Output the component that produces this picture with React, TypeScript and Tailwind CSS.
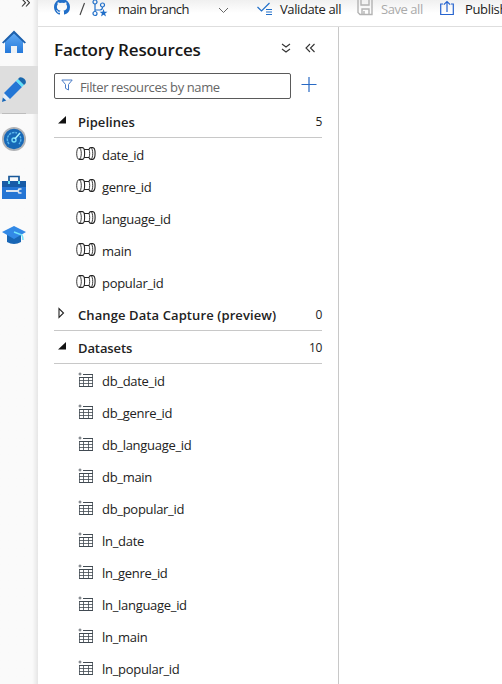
import React from "react";

const pipelines = ["date_id", "genre_id", "language_id", "main", "popular_id"];
const datasets = [
  "db_date_id", "db_genre_id", "db_language_id", "db_main", "db_popular_id",
  "ln_date", "ln_genre_id", "ln_language_id", "ln_main", "ln_popular_id",
];

function PipelineIcon() {
  return (
    <svg className="mt-[9px] h-[13px] w-5 shrink-0 self-start" viewBox="0 0 20 13" fill="none" stroke="#252525" strokeWidth="1.1">
      <ellipse cx="3" cy="6.500" rx="2.300" ry="5.900" strokeWidth=".9" />
      <path d="M3 .6h3.500C9.300.6 9.300 12.400 6.500 12.400H3" />
      <path d="M8 2.500h5M8 10.500h5" />
      <path d="M13 2.500q.5-1.900 2-1.900h1.700c3.200 0 3.200 11.800 0 11.800H15q-1.500 0-2-1.900" />
      <path d="M13 2.500c.9 2 .9 6 0 8M15 .6c2.300 1.500 2.300 10.300 0 11.800" strokeWidth=".9" />
    </svg>
  );
}

function DatasetIcon() {
  return (
    <svg className="ml-[2px] mr-[2px] mt-[8px] h-4 w-4 shrink-0 self-start" viewBox="0 0 16 16" fill="none" stroke="#414a52">
      <path d="M5 2.500h10M1 5.500h14M1 14.500h14" strokeWidth="1.100" />
      <path d="M1.500 5v9M5.500 5v9M10.500 5v9M14.500 2v12M1 8.500h14M1 11.500h14" strokeWidth=".8" />
      <path d="M.5 2h3M2 .5v3" strokeWidth=".8" />
    </svg>
  );
}

function Section({ title, count, open, titleClass }: { title: string; count: number; open: boolean; titleClass: string }) {
  return (
    <div className="flex h-[33px] items-center border-b border-[#c8c8c8] pt-px text-[#222]">
      <svg className="mb-[3px] ml-[3px] mr-[9px] h-3 w-3" viewBox="0 0 12 12">
        {open ? <path d="M1 9.500 9 2v7.500z" fill="#111" /> : <path d="M2 1.500v9L6.500 6z" fill="none" stroke="#222" strokeWidth="1.100" />}
      </svg>
      <span className={`flex-1 whitespace-nowrap pt-[2px] text-[13px] font-semibold ${titleClass}`}>{title}</span>
      <span className="pt-px text-[12px] font-medium tracking-[-0.4px]">{count}</span>
    </div>
  );
}

function Rows({ names, kind }: { names: string[]; kind: "pipeline" | "dataset" }) {
  return (
    <ul>
      {names.map((n) => (
        <li key={n} className="flex h-8 items-center pl-[22px]">
          {kind === "pipeline" ? <PipelineIcon /> : <DatasetIcon />}
          <span className="ml-[6px] pt-[3px] text-[13px] tracking-[-0.3px] text-[#222]">{n}</span>
        </li>
      ))}
    </ul>
  );
}

function Sidebar() {
  return (
    <nav className="flex w-[38px] shrink-0 flex-col bg-gradient-to-r from-[#fafafa] from-85% to-[#e6e6e6]">
      <div className="flex h-[66px] flex-col">
        <svg className="ml-[21px] h-[8px] w-[9px]" viewBox="0 0 9 8" fill="none" stroke="#333" strokeWidth="1.100"><path d="m1-1 3.500 3.700L1 6.500M5-1l3.500 3.700L5 6.500" /></svg>
        <svg className="ml-[2px] mt-[22px] h-6 w-6" viewBox="0 0 24 24">
          <defs><linearGradient id="home" x2="0" y2="1"><stop stopColor="#64adf5" /><stop offset="1" stopColor="#2478da" /></linearGradient></defs>
          <path d="M3 10 12 2l9 8v13H3z" fill="url(#home)" />
          <path d="M9 16h6v7H9z" fill="#edf1f5" />
          <path d="m0 12.500 12-12 12 12-1.500 1L12 3.500l-10.500 10z" fill="#1d60ac" />
        </svg>
      </div>
      <div className="flex h-12 flex-col bg-[#dedede]">
        <svg className="ml-[2px] mt-[11px] h-[26px] w-6" viewBox="0 0 24 26">
          <path d="m2 16 6 6-8 3z" fill="#e4edf6" /><path d="m.8 20.500 3.500 3L0 25z" fill="#1966b5" />
          <path d="M2 16 14 4l6 6L8 22z" fill="#2376d5" /><path d="m14 4 2-2 6 6-2 2z" fill="#5de1fa" />
          <path d="m16 2 1.500-1.500q2.500-.8 5 1.500 2.300 2.500.8 4.700L22 8z" fill="#1867ad" />
        </svg>
        <div className="ml-[2px] mt-[10px] h-px w-6 bg-[#bdbdbd]" />
      </div>
      <svg className="ml-[2px] mt-[13px] h-6 w-6" viewBox="0 0 24 24">
        <circle cx="12" cy="12" r="12" fill="#b1b3b6" /><circle cx="12" cy="12" r="10.200" fill="#1768b7" />
        <path d="M7 17a7 7 0 0 1 8-11M18 9a7 7 0 0 1-1 8" fill="none" stroke="#58b5eb" strokeWidth="1.500" strokeDasharray="2.500 .8" />
        <circle cx="12" cy="13" r="2.700" fill="#76dcfa" /><path d="m12 13 6-7" stroke="#a8f3ff" strokeWidth="1.500" /><circle cx="12" cy="13" r="1.300" fill="#1768b7" />
      </svg>
      <svg className="ml-[2px] mt-[24px] h-[25px] w-6" viewBox="0 0 24 25">
        <path d="M7 6V1.500h10V6" fill="none" stroke="#185899" strokeWidth="1.700" />
        <path d="M0 6h24v18H0z" fill="#2475d4" /><path d="M0 6h24v6H0z" fill="#175ba7" />
        <path d="M6 6h2v3H6zm10 0h2v3h-2z" fill="#61dff5" />
        <path d="M4 15h12v2H4z" fill="#dce5ef" /><path d="M19.500 14H17l-1 2 1 2h2.500" fill="none" stroke="#dce5ef" strokeWidth="1.700" />
      </svg>
      <svg className="ml-[2px] mt-[26px] h-5 w-6" viewBox="0 0 24 20">
        <path d="M5 7h14v9q-7 4-14 0z" fill="#1866b5" /><path d="m0 6 12-6 12 6-12 7z" fill="#3289e6" />
        <path d="m12 6 8 3q1 2 1 5" fill="none" stroke="#71e5fb" strokeWidth="1.500" />
      </svg>
    </nav>
  );
}

function Toolbar() {
  return (
    <header className="flex h-[27px] shrink-0 overflow-hidden border-b border-[#dedede] bg-gradient-to-b from-[#f0f0f0] to-white to-50% text-[13px] leading-[18px] text-[#222]">
      <svg className="ml-[16px] h-4 w-4 shrink-0" viewBox="0 0 16 16">
        <path fill="#216fc9" fillRule="evenodd" d="M8-1C3.600-1 0 2.600 0 7c0 3.600 2.300 6.600 5.500 7.600.4.100.5-.2.500-.4v-1.500c-2.200.5-2.700-1-2.700-1-.4-.9-.9-1.100-.9-1.100-.7-.5.100-.5.100-.5.800.1 1.200.8 1.200.8.700 1.200 1.900.9 2.300.7.100-.5.300-.9.500-1.100C4.700 10.300 2.900 9.600 2.900 6.500c0-.9.300-1.600.8-2.100-.1-.2-.4-1 .1-2.100 0 0 .7-.2 2.200.8a7.700 7.700 0 0 1 4 0c1.500-1 2.200-.8 2.200-.8.5 1.100.2 1.900.1 2.100.5.500.8 1.200.8 2.100 0 3.100-1.900 3.800-3.700 4 .3.200.6.700.6 1.500v2.200c0 .2.100.5.500.4A8 8 0 0 0 16 7c0-4.400-3.600-8-8-8Z" />
      </svg>
      <svg className="ml-[9px] h-4 w-[8px] shrink-0" viewBox="0 0 8 16"><path d="M1 15 5.500 3" stroke="#444" strokeWidth="1.100" /></svg>
      <svg className="ml-[5px] h-[18px] w-[17px] shrink-0" viewBox="0 0 17 18" fill="none" stroke="#216fc9" strokeWidth="1.200">
        <circle cx="3" cy="2" r="2" /><circle cx="3" cy="13.500" r="2" /><circle cx="10.500" cy="5" r="2" /><path d="M3 4v7.500M3 10h5q2.500 0 2.500-3" />
        <path fill="#216fc9" stroke="none" d="m11.500 9 1 2.700 3 .1-2.400 1.800.9 2.900-2.500-1.700L9 16.500l.9-2.900-2.400-1.800 3-.1z" />
      </svg>
      <span className="ml-[9px] w-[72px] shrink-0 whitespace-nowrap tracking-[-0.5px]">main branch</span>
      <svg className="ml-[28px] mt-[7px] h-2 w-[11px] shrink-0" viewBox="0 0 11 8" fill="none" stroke="#666"><path d="m1 1 4.500 4.500L10 1" /></svg>
      <svg className="ml-[28px] h-4 w-4 shrink-0" viewBox="0 0 16 16" fill="none" stroke="#216fc9"><path d="m.5 7 4 4L12.500 3" strokeWidth="1.200" /><path d="M9 9.500h6M9 12h6M9 14.500h6" /></svg>
      <span className="ml-[7px] w-[64px] shrink-0 whitespace-nowrap tracking-[-0.4px]">Validate all</span>
      <svg className="ml-[13px] h-4 w-4 shrink-0" viewBox="0 0 16 16" fill="none" stroke="#b3b3b3" strokeWidth="1.400"><path d="M1-1v13.500L3 14.500h12V-1M4-1v6h8v-6M5 14V9h7v5M7 11v3" /></svg>
      <span className="ml-[8px] w-[43px] shrink-0 whitespace-nowrap tracking-[-0.45px] text-[#aaa]">Save all</span>
      <svg className="ml-[16px] h-4 w-[14px] shrink-0" viewBox="0 0 14 16" fill="none" stroke="#2563cf" strokeWidth="1.200"><path d="M3 4H.7v10.500h12.600V4H11M7 12V1.500M3.800 4.700 7 1.500l3.200 3.200" /></svg>
      <span className="ml-[11px] whitespace-nowrap tracking-[-0.35px]">Publish</span>
    </header>
  );
}

export default function App() {
  return (
    <div className="flex h-[684px] w-[502px] overflow-hidden bg-white font-['Open_Sans','Noto_Sans',sans-serif]">
      <Sidebar />
      <div className="flex min-w-0 flex-1 flex-col">
        <Toolbar />
        <div className="flex flex-1">
          <aside className="w-[301px] border-r border-[#c8c8c8] pl-4 pr-4">
            <div className="flex h-[46px] items-center">
              <h1 className="w-[227px] whitespace-nowrap text-[17px] font-semibold tracking-[-0.15px] text-[#171717]">Factory Resources</h1>
              <svg className="mb-1 h-[10px] w-[10px]" viewBox="0 0 10 10" fill="none" stroke="#333" strokeWidth="1.100"><path d="m1 1 4 3 4-3M1 6l4 3 4-3" /></svg>
              <svg className="mb-1 ml-[14px] h-[10px] w-[10px]" viewBox="0 0 10 10" fill="none" stroke="#333" strokeWidth="1.100"><path d="M5 1 1 5l4 4M9.500 1l-4 4 4 4" /></svg>
            </div>
            <div className="mb-[6px] flex h-[26px]">
              <div className="flex w-[237px] rounded-[2px] border border-[#5a5a5a] pl-[6px]">
                <svg className="mt-[5px] h-3 w-3" viewBox="0 0 12 12" fill="none" stroke="#4a7cc7"><path d="M.8 1h10.400L7.500 5.500V11l-3-1.700V5.500z" /></svg>
                <input className="ml-[7px] min-w-0 flex-1 pt-[3px] text-[13px] tracking-[-0.4px] outline-none placeholder:text-[#666]" placeholder="Filter resources by name" />
              </div>
              <svg className="ml-[10px] mt-[3px] h-4 w-4" viewBox="0 0 16 16" stroke="#2869c4" strokeWidth="1.200"><path d="M.5 8.500h15M8 1v15" /></svg>
            </div>
            <Section title="Pipelines" count={5} open titleClass="tracking-[0.05px]" />
            <Rows names={pipelines} kind="pipeline" />
            <Section title="Change Data Capture (preview)" count={0} open={false} titleClass="tracking-[0.1px]" />
            <Section title="Datasets" count={10} open titleClass="tracking-[-0.1px]" />
            <Rows names={datasets} kind="dataset" />
          </aside>
          <main className="flex-1" />
        </div>
      </div>
    </div>
  );
}
